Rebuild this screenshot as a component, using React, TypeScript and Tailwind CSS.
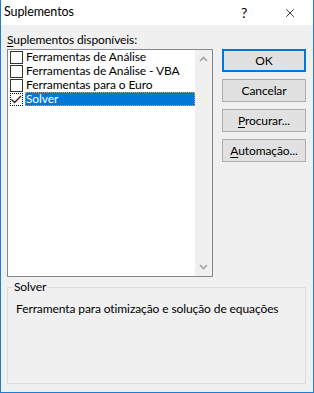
import { X } from 'lucide-react';

const items = [
  { name: 'Ferramentas de Análise', checked: false },
  { name: 'Ferramentas de Análise - VBA', checked: false },
  { name: 'Ferramentas para o Euro', checked: false },
  { name: 'Solver', checked: true },
];

function Chevron({ down }: { down?: boolean }) {
  return (
    <svg width="9" height="6" viewBox="0 0 9 6">
      <polyline
        points={down ? '1,1 4.5,4.5 8,1' : '1,5 4.5,1.5 8,5'}
        fill="none"
        stroke="#a3a3a3"
        strokeWidth="1.6"
      />
    </svg>
  );
}

function Button({ children, primary }: { children: React.ReactNode; primary?: boolean }) {
  return (
    <button
      className={
        primary
          ? 'w-[84px] h-[23px] bg-[#e1e1e1] border-2 border-[#0078d7] text-[12px] leading-none text-black'
          : 'w-[84px] h-[23px] bg-[#e1e1e1] border border-[#adadad] text-[12px] leading-none text-black'
      }
    >
      {children}
    </button>
  );
}

export default function App() {
  return (
    <div
      className="w-[314px] h-[393px] bg-[#f0f0f0] border-x border-b border-[#1a7fd4] flex flex-col text-black whitespace-nowrap tracking-[-0.1px]"
      style={{ fontFamily: 'Lato, sans-serif' }}
    >
      <div className="h-[25px] bg-white flex items-center pl-[3px] text-[12.5px] shrink-0">
        <span className="flex-1">Suplementos</span>
        <span className="w-[10px] text-[14px] mr-[32px]">?</span>
        <X className="w-[14px] h-[14px] mr-[16px]" strokeWidth={1.3} />
      </div>

      <div className="pl-[6px] pt-[8px] flex flex-col">
        <div className="h-[14px] text-[12px] leading-[14px]">
          <span className="underline underline-offset-2">S</span>uplementos disponíveis:
        </div>

        <div className="flex mt-[2px]">
          <div className="w-[206px] h-[228px] bg-white border border-[#828790] flex">
            <div className="flex-1 pl-[2px]">
              {items.map((item) => (
                <div key={item.name} className="h-[14px] flex items-center">
                  <div
                    className={
                      item.checked
                        ? 'w-[13px] h-[13px] border border-dotted border-black bg-white flex items-center justify-center shrink-0'
                        : 'w-[13px] h-[13px] border border-[#333333] bg-white shrink-0'
                    }
                  >
                    {item.checked && (
                      <svg width="11" height="9" viewBox="0 0 11 9">
                        <polyline points="0.5,4.5 3.5,7.5 10,1" fill="none" stroke="#222222" strokeWidth="1.3" />
                      </svg>
                    )}
                  </div>
                  <div
                    className={
                      item.checked
                        ? 'ml-[2px] flex-1 h-[14px] bg-[#0078d7] text-white outline outline-1 outline-dotted outline-[#e69a3c] -outline-offset-1 pl-[1px] text-[12px] leading-[14px]'
                        : 'ml-[2px] flex-1 h-[14px] pl-[1px] text-[12px] leading-[14px]'
                    }
                  >
                    {item.name}
                  </div>
                </div>
              ))}
            </div>
            <div className="w-[17px] bg-[#f0f0f0] flex flex-col justify-between items-center py-[6px]">
              <Chevron />
              <Chevron down />
            </div>
          </div>

          <div className="ml-[9px] flex flex-col gap-[7px]">
            <Button primary>OK</Button>
            <Button>Cancelar</Button>
            <Button>
              <span className="underline underline-offset-2">P</span>rocurar...
            </Button>
            <Button>
              <span className="underline underline-offset-2">A</span>utomação...
            </Button>
          </div>
        </div>

        <div className="relative mt-[10px] w-[299px] h-[97px] border border-[#dcdcdc]">
          <span className="absolute -top-[8px] left-[5px] px-[1px] bg-[#f0f0f0] text-[12px] leading-[14px]">
            Solver
          </span>
          <div className="pt-[14px] pl-[8px] text-[12px] leading-[14px]">
            Ferramenta para otimização e solução de equações
          </div>
        </div>
      </div>
    </div>
  );
}
